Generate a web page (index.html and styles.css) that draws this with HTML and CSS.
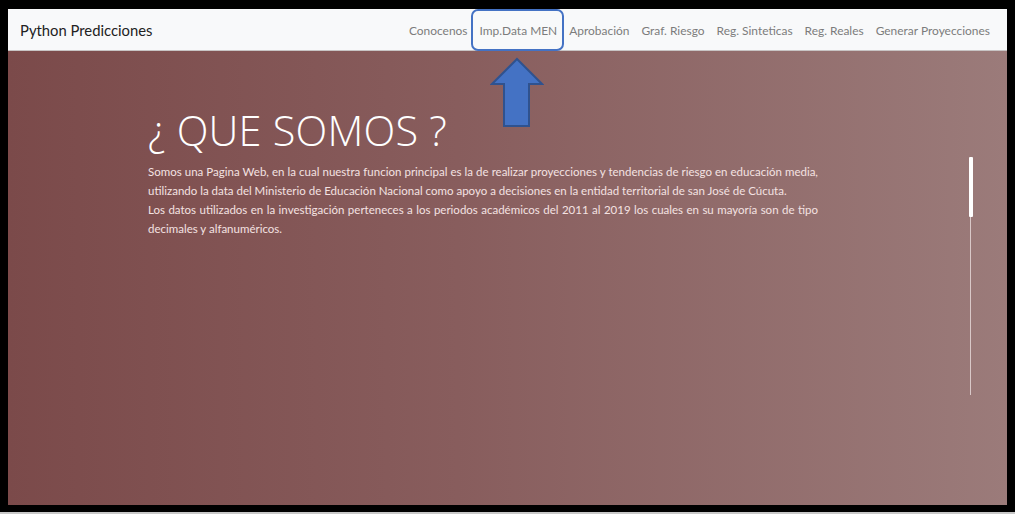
FILE: index.html
```html
<!DOCTYPE html>
<html lang="es">
<head>
<meta charset="utf-8">
<title>Python Predicciones</title>
<link rel="stylesheet" href="styles.css">
</head>
<body>
<div class="frame">
  <nav class="navbar">
    <a class="brand" href="#">Python Predicciones</a>
    <ul class="nav-links">
      <li><a href="#">Conocenos</a></li>
      <li class="highlight"><a href="#">Imp.Data MEN</a></li>
      <li><a href="#">Aprobación</a></li>
      <li><a href="#">Graf. Riesgo</a></li>
      <li><a href="#">Reg. Sinteticas</a></li>
      <li><a href="#">Reg. Reales</a></li>
      <li><a href="#">Generar Proyecciones</a></li>
    </ul>
  </nav>
  <main class="hero">
    <svg class="arrow" width="54" height="72" viewBox="0 0 54 72">
      <polygon points="27,2 52,27 39,27 39,69 14,69 14,27 2,27" fill="#4472c4" stroke="#2f528f" stroke-width="2" stroke-linejoin="miter"/>
    </svg>
    <section class="content">
      <h1 class="title">¿ QUE SOMOS ?</h1>
      <p class="text">Somos una Pagina Web, en la cual nuestra funcion principal es la de realizar proyecciones y tendencias de riesgo en educación media, utilizando la data del Ministerio de Educación Nacional como apoyo a decisiones en la entidad territorial de san José de Cúcuta.<br>Los datos utilizados en la investigación perteneces a los periodos académicos del 2011 al 2019 los cuales en su mayoría son de tipo decimales y alfanuméricos.</p>
    </section>
    <div class="scroll-indicator">
      <span class="thumb"></span>
      <span class="track"></span>
    </div>
  </main>
</div>
<div class="bottom-strip"></div>
</body>
</html>
```
FILE: styles.css
```css
html, body {
  margin: 0;
  padding: 0;
}
body {
  background: #000;
  width: 1015px;
  height: 514px;
  overflow: hidden;
  font-family: "Lato", "Open Sans", sans-serif;
}
.frame {
  margin: 9px 8px 0 8px;
  height: 496px;
  display: flex;
  flex-direction: column;
}
.navbar {
  height: 42px;
  flex: none;
  background: #f8f9fa;
  border-bottom: 1px solid #c8c4c4;
  box-sizing: border-box;
  display: flex;
  align-items: center;
  justify-content: space-between;
  padding: 1px 17px 0 12px;
}
.brand {
  color: #222;
  text-decoration: none;
  font-size: 14.8px;
}
.nav-links {
  list-style: none;
  margin: 0;
  padding: 0;
  display: flex;
  gap: 12px;
  align-items: center;
  height: 100%;
}
.nav-links li {
  display: flex;
  align-items: center;
  height: 100%;
  position: relative;
}
.nav-links a {
  color: #7c7c7c;
  text-decoration: none;
  font-size: 11.95px;
}
.nav-links .highlight::after {
  content: "";
  position: absolute;
  left: -9px;
  right: -7px;
  top: -1px;
  bottom: -1px;
  border: 2px solid #4472c4;
  border-radius: 7px;
}
.hero {
  flex: 1;
  position: relative;
  background: linear-gradient(to right, #7b4a4a 0%, #885d5d 45%, #9b7b7a 100%);
  display: flex;
}
.arrow {
  position: absolute;
  left: 482px;
  top: 6px;
}
.content {
  margin-left: 140px;
  padding-top: 54px;
  width: 670px;
}
.title {
  margin: 0;
  font-family: "Open Sans", sans-serif;
  font-weight: 300;
  font-size: 41.5px;
  line-height: 50px;
  color: #fff;
  letter-spacing: 0.2px;
}
.text {
  margin: 7px 0 0 0;
  font-size: 11.5px;
  line-height: 19px;
  color: #f4e2e2;
  text-align: justify;
}
.scroll-indicator {
  position: absolute;
  left: 960px;
  top: 106px;
  width: 5px;
  display: flex;
  flex-direction: column;
  align-items: center;
}
.thumb {
  width: 4px;
  height: 60px;
  background: #fff;
  border-radius: 1px;
}
.track {
  width: 1px;
  height: 178px;
  background: #d9c8c8;
}
.bottom-strip {
  margin-top: 7px;
  height: 2px;
  background: #c8c8c8;
}
```
